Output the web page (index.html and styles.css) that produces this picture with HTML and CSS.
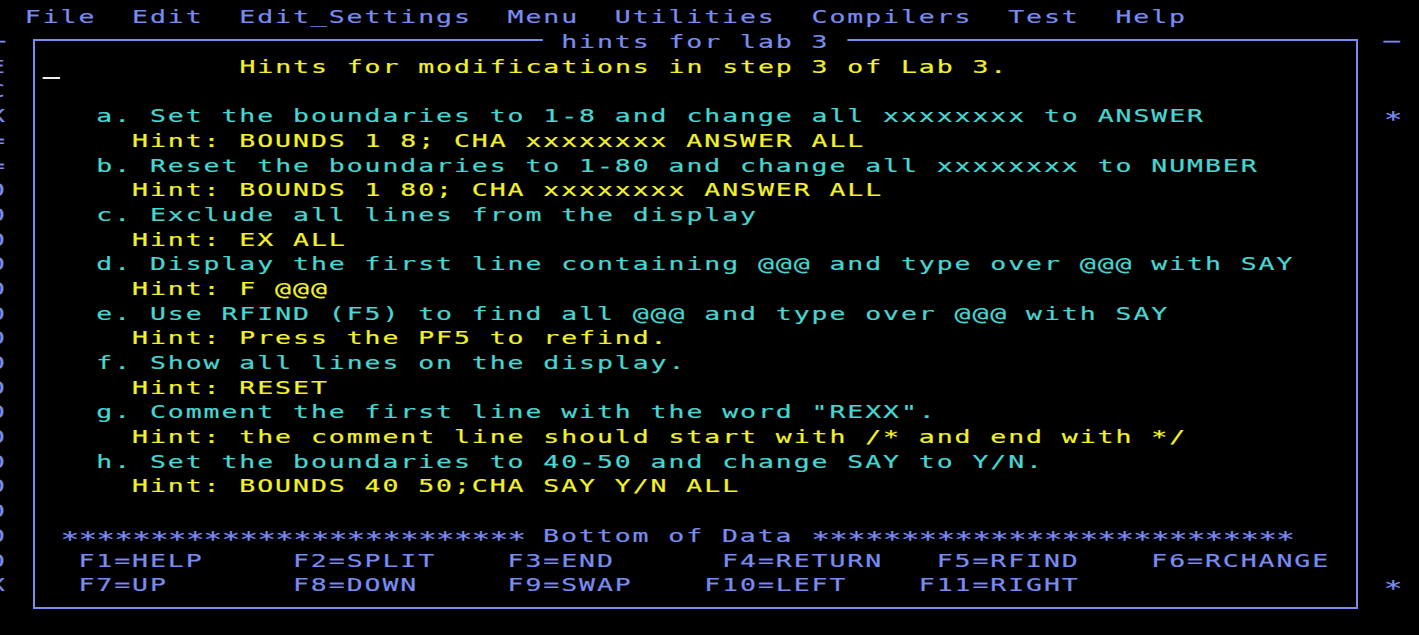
FILE: index.html
```html
<!DOCTYPE html>
<html lang="en">
<head>
<meta charset="utf-8">
<title>ISPF - hints for lab 3</title>
<link rel="stylesheet" href="styles.css">
</head>
<body>
<div class="terminal">
  <div class="frame"></div>
  <div class="screen">
<div class="row">  <span class="blue">File  Edit  Edit_Settings  Menu  Utilities  Compilers  Test  Help</span></div>
<div class="row"><span class="blue">─</span>                              <span class="blue title"> hints for lab 3 </span>                              <span class="blue">─</span></div>
<div class="row"><span class="blue">E</span>  <span class="cursor"> </span>          <span class="yellow">Hints for modifications in step 3 of Lab 3.</span></div>
<div class="row"><span class="blue">C</span></div>
<div class="row"><span class="blue">X</span>     <span class="cyan">a. Set the boundaries to 1-8 and change all xxxxxxxx to ANSWER</span>          <span class="blue stars">*</span></div>
<div class="row"><span class="blue">=</span>       <span class="yellow">Hint: BOUNDS 1 8; CHA xxxxxxxx ANSWER ALL</span></div>
<div class="row"><span class="blue">=</span>     <span class="cyan">b. Reset the boundaries to 1-80 and change all xxxxxxxx to NUMBER</span></div>
<div class="row"><span class="blue">0</span>       <span class="yellow">Hint: BOUNDS 1 80; CHA xxxxxxxx ANSWER ALL</span></div>
<div class="row"><span class="blue">0</span>     <span class="cyan">c. Exclude all lines from the display</span></div>
<div class="row"><span class="blue">0</span>       <span class="yellow">Hint: EX ALL</span></div>
<div class="row"><span class="blue">0</span>     <span class="cyan">d. Display the first line containing @@@ and type over @@@ with SAY</span></div>
<div class="row"><span class="blue">0</span>       <span class="yellow">Hint: F @@@</span></div>
<div class="row"><span class="blue">0</span>     <span class="cyan">e. Use RFIND (F5) to find all @@@ and type over @@@ with SAY</span></div>
<div class="row"><span class="blue">0</span>       <span class="yellow">Hint: Press the PF5 to refind.</span></div>
<div class="row"><span class="blue">0</span>     <span class="cyan">f. Show all lines on the display.</span></div>
<div class="row"><span class="blue">0</span>       <span class="yellow">Hint: RESET</span></div>
<div class="row"><span class="blue">0</span>     <span class="cyan">g. Comment the first line with the word "REXX".</span></div>
<div class="row"><span class="blue">0</span>       <span class="yellow">Hint: the comment line should start with /* and end with */</span></div>
<div class="row"><span class="blue">0</span>     <span class="cyan">h. Set the boundaries to 40-50 and change SAY to Y/N.</span></div>
<div class="row"><span class="blue">0</span>       <span class="yellow">Hint: BOUNDS 40 50;CHA SAY Y/N ALL</span></div>
<div class="row"><span class="blue">0</span></div>
<div class="row"><span class="blue">0</span>   <span class="blue"><span class="stars">**************************</span> Bottom of Data <span class="stars">***************************</span></span></div>
<div class="row"><span class="blue">0</span>    <span class="blue">F1=HELP     F2=SPLIT    F3=END      F4=RETURN   F5=RFIND    F6=RCHANGE</span></div>
<div class="row"><span class="blue">X</span>    <span class="blue">F7=UP       F8=DOWN     F9=SWAP    F10=LEFT    F11=RIGHT</span>                 <span class="blue stars">*</span></div>
<div class="row"> </div>
  </div>
</div>
</body>
</html>
```
FILE: styles.css
```css
:root {
  --blue: #7a8cf0;
  --cyan: #48d6d2;
  --yellow: #f2f22c;
  --white: #eeeeee;
}

html, body {
  margin: 0;
  padding: 0;
  height: 100%;
  background: #000;
  overflow: hidden;
}

.terminal {
  position: relative;
  width: 1419px;
  height: 635px;
  overflow: hidden;
  background: #000;
}

/* popup window border, drawn in real pixels over the screen */
.frame {
  position: absolute;
  z-index: 0;
  left: 33px;
  top: 38.7px;
  width: 1325px;
  height: 570.6px;
  box-sizing: border-box;
  border: 2px solid var(--blue);
}

/* 3270 character grid: 17.885px x 24.7px cells, column -2 starts at x = -11.27 */
.screen {
  position: relative;
  z-index: 1;
  width: 990px;
  margin-left: -11.27px;
  padding-top: 5.4px;
  transform: scaleX(1.45);
  transform-origin: 0 0;
  font-family: "DejaVu Sans Mono", monospace;
  font-size: 18.27px;
  letter-spacing: 1.3345px;
  line-height: 24.7px;
  color: var(--blue);
  -webkit-text-stroke: 0.2px currentColor;
}

.row {
  height: 24.7px;
  white-space: pre;
}

.blue { color: var(--blue); }
.cyan { color: var(--cyan); }
.yellow { color: var(--yellow); }

/* 3270 asterisks are larger and centred in the cell; same 12.3345px advance */
.stars {
  position: relative;
  top: 5px;
  font-size: 21.593px;
  letter-spacing: -0.6655px;
  line-height: 1;
}

.title {
  position: relative;
  z-index: 2;
  background: #000;
}

.cursor {
  border-bottom: 2.5px solid var(--white);
}
```
